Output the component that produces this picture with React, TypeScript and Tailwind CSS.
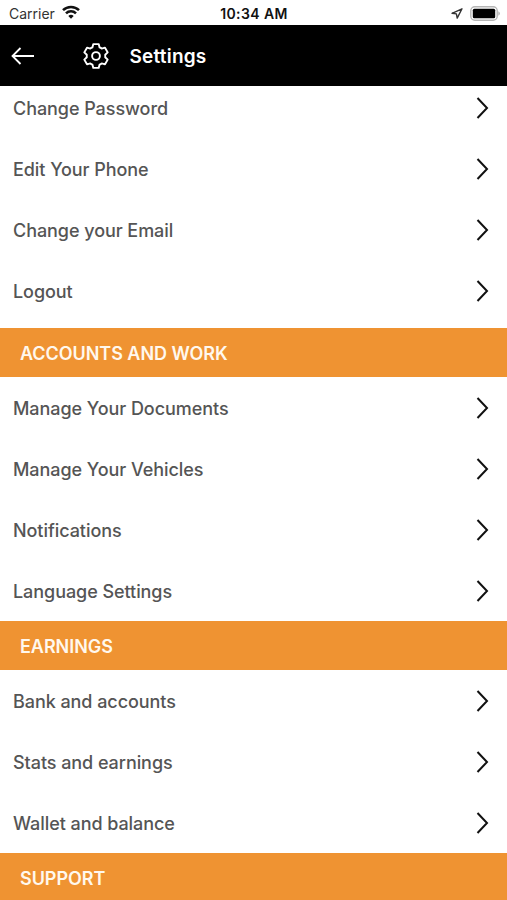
type SectionProps = {
  title?: string;
  items: string[];
};

const sections: SectionProps[] = [
  { items: ['Change Password', 'Edit Your Phone', 'Change your Email', 'Logout'] },
  {
    title: 'ACCOUNTS AND WORK',
    items: ['Manage Your Documents', 'Manage Your Vehicles', 'Notifications', 'Language Settings'],
  },
  { title: 'EARNINGS', items: ['Bank and accounts', 'Stats and earnings', 'Wallet and balance'] },
  { title: 'SUPPORT', items: [] },
];

const StatusBar = () => (
  <div className="grid h-[25px] shrink-0 grid-cols-3 items-center bg-white pl-[9px] pr-[7px] pt-[2px] text-[#111]">
    <div className="flex items-center gap-[7px]">
      <span className="text-[14px] leading-none text-[#333]">Carrier</span>
      <svg width="18" height="14" viewBox="0 0 18 14" className="mb-[3px]" fill="none" stroke="#111" strokeWidth="2.5">
        <path d="M1 5.2a11.3 11.3 0 0 1 16 0" />
        <path d="M4 8.4a7 7 0 0 1 10 0" />
        <path d="M6.3 11a3.9 3.9 0 0 1 5.4 0L9 13.8z" fill="#111" stroke="none" />
      </svg>
    </div>
    <span className="-ml-[1px] text-center text-[14px] font-semibold leading-none tracking-[0.4px]">10:34 AM</span>
    <div className="mb-px flex items-center justify-end gap-[7px]">
      <svg width="12" height="11" viewBox="0 0 12 11" fill="none" stroke="#333" strokeWidth="1.4" strokeLinejoin="round">
        <path d="M11 .8 1 5.3l4.4.6.8 4.2z" />
      </svg>
      <svg width="30" height="15" viewBox="0 0 30 15">
        <rect x="0.8" y="0.8" width="26.4" height="13.4" rx="4" fill="#fff" stroke="#b5b5b5" strokeWidth="1.4" />
        <rect x="2.8" y="2.8" width="22.4" height="9.4" rx="1.5" fill="#000" />
        <path d="M28.3 5.2q1.6.8 1.6 2.3t-1.6 2.3z" fill="#b5b5b5" />
      </svg>
    </div>
  </div>
);

const GearIcon = () => (
  <svg
    width="26"
    height="26"
    viewBox="-13 -13 26 26"
    className="ml-[48px]"
    fill="none"
    stroke="currentColor"
    strokeWidth="1.9"
    strokeLinejoin="round"
  >
    <path d="M-2.7-11.9H2.7L3.6-8.6Q4.8-8.1 5.7-7.4L9-8.3 11.7-3.6 9.2-1.2Q9.4 0 9.2 1.2L11.7 3.6 9 8.3 5.7 7.4Q4.8 8.1 3.6 8.6L2.7 11.9H-2.7L-3.6 8.6Q-4.8 8.1-5.7 7.4L-9 8.3-11.7 3.6-9.2 1.2Q-9.4 0-9.2-1.2L-11.7-3.6-9-8.3-5.7-7.4Q-4.8-8.1-3.6-8.6Z" />
    <circle r="3.9" />
  </svg>
);

const Header = () => (
  <header className="flex h-[61px] shrink-0 items-center bg-black pl-[11px] text-white">
    <svg width="24" height="20" viewBox="0 0 24 20" fill="none" stroke="currentColor" strokeWidth="1.8">
      <path d="M23 10H1.5M9.5 2 1.5 10l8 8" />
    </svg>
    <GearIcon />
    <h1 className="ml-[20.5px] pt-[3px] text-[19px] font-semibold tracking-[0.2px]">Settings</h1>
  </header>
);

const Row = ({ label }: { label: string }) => (
  <li className="flex h-[61px] items-center justify-between pl-[13px] pr-[18px]">
    <span className="pt-px text-[18px] font-medium tracking-[-0.06px] text-[#555]">{label}</span>
    <svg width="13" height="22" viewBox="0 0 13 22" fill="none" stroke="#111" strokeWidth="2">
      <path d="m1.5 1 9.5 10-9.5 10" />
    </svg>
  </li>
);

const Section = ({ title, items }: SectionProps) => (
  <section>
    {title && (
      <h2 className="flex h-[49px] items-center bg-[#ef9332] pl-[20px] pt-px text-[18px] font-semibold tracking-[-0.05px] text-[#fff8ee]">
        {title}
      </h2>
    )}
    <ul>
      {items.map((item) => (
        <Row key={item} label={item} />
      ))}
    </ul>
  </section>
);

export default function App() {
  return (
    <div className="flex h-[900px] w-[507px] flex-col overflow-hidden bg-white font-['Inter',sans-serif]">
      <StatusBar />
      <Header />
      {/* list is scrolled a little under the header */}
      <main className="flex-1 overflow-hidden">
        <div className="-mt-[8.5px]">
          <div className="pb-[6.5px]">
            <Section {...sections[0]} />
          </div>
          {sections.slice(1).map((section) => (
            <Section key={section.title} {...section} />
          ))}
        </div>
      </main>
    </div>
  );
}
